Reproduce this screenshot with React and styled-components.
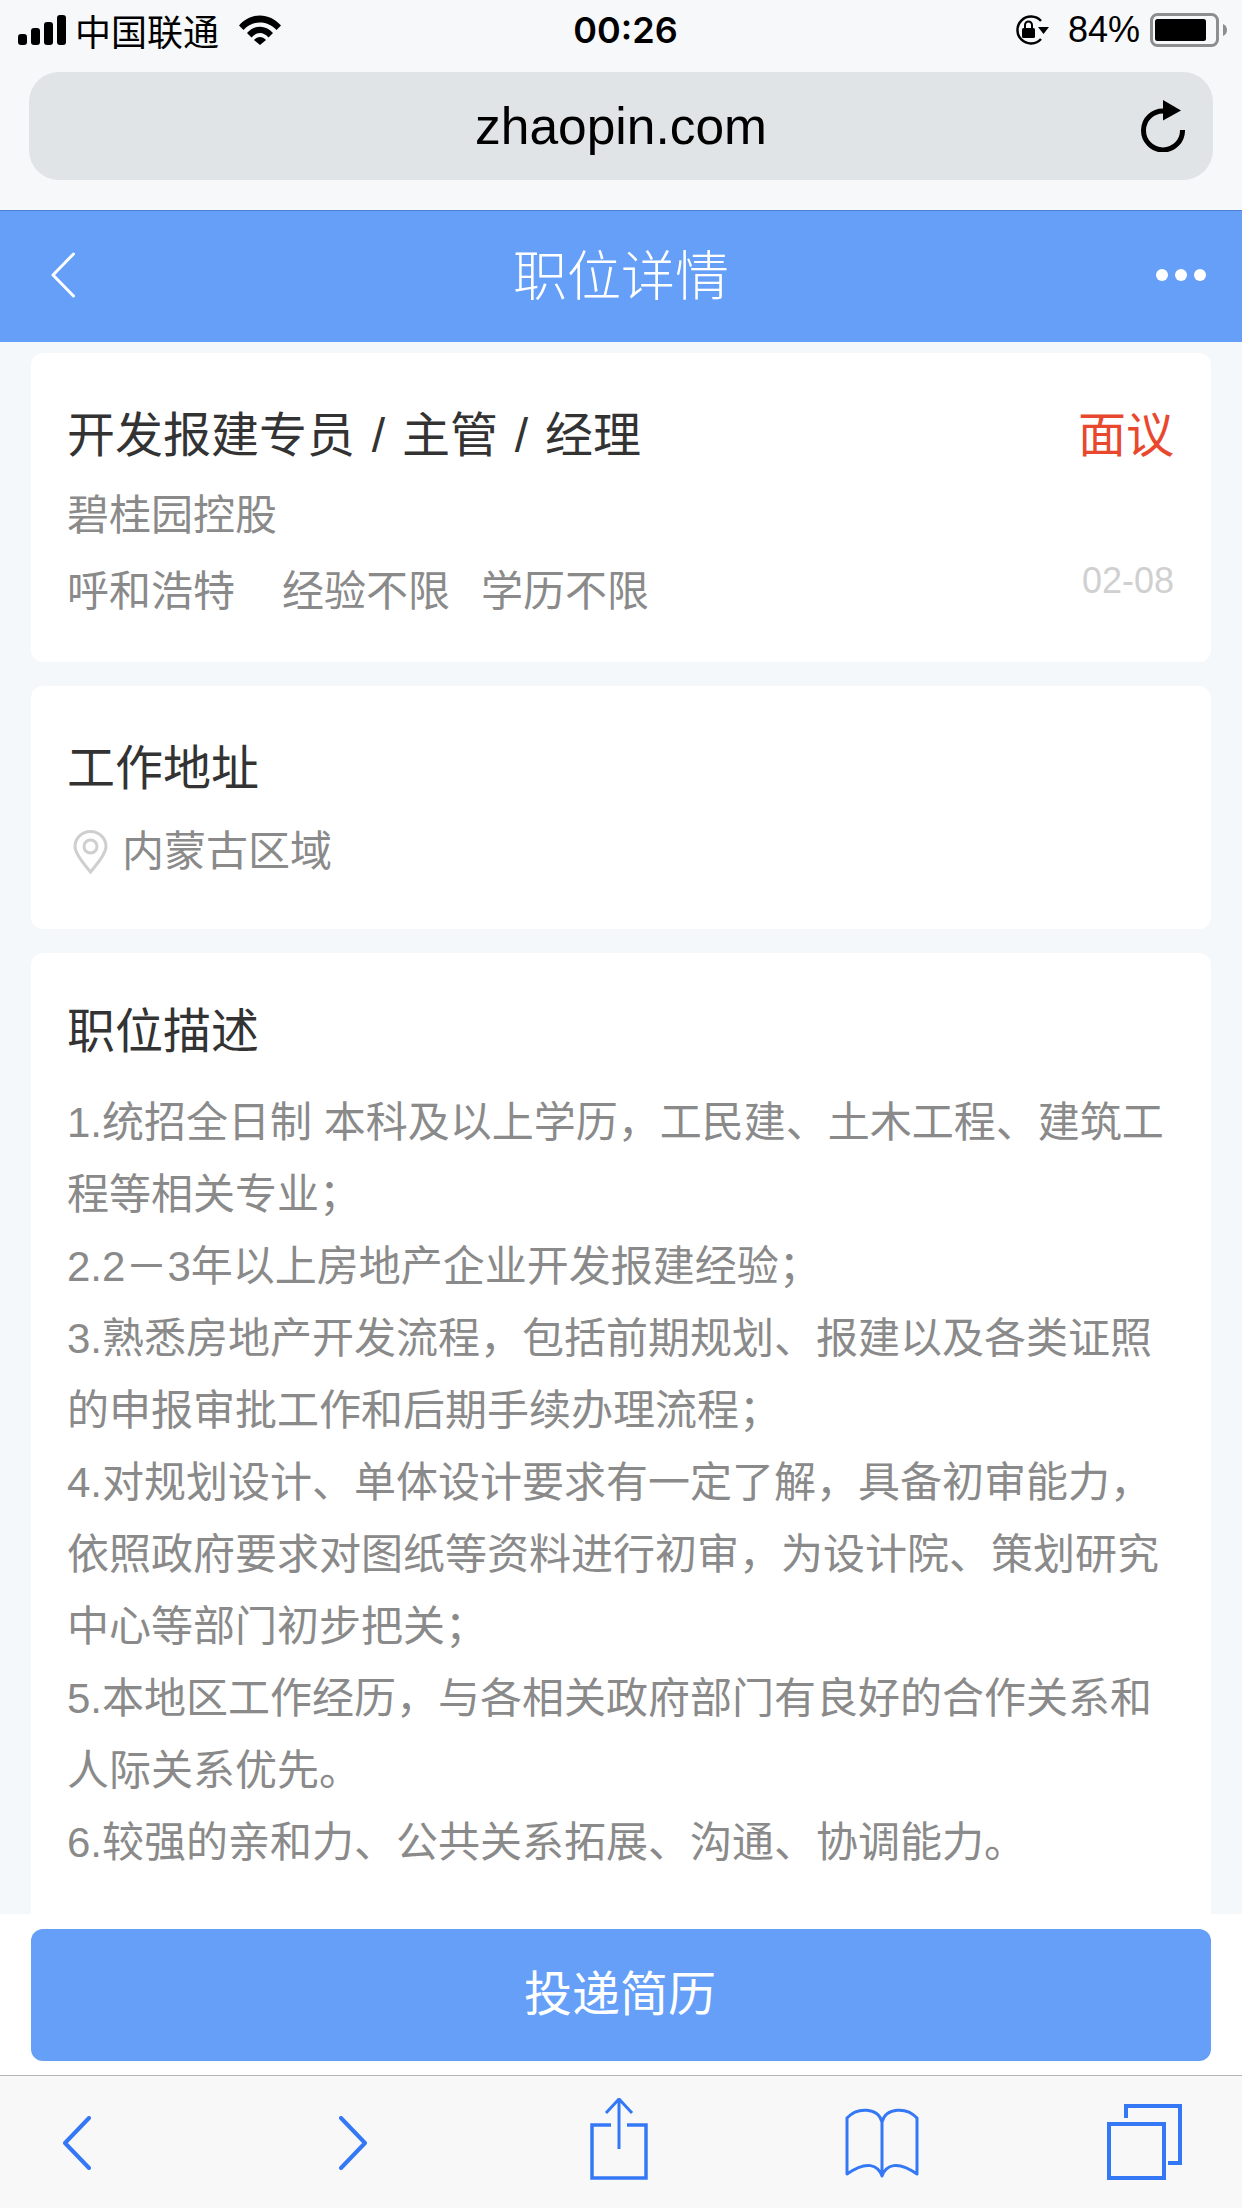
import styled, { createGlobalStyle } from "styled-components";

const GlobalStyle = createGlobalStyle`
  html, body {
    margin: 0;
    padding: 0;
    background: #f4f8fb;
    font-family: "Liberation Sans", "Noto Sans CJK SC", sans-serif;
  }
`;

const Page = styled.div`
  width: 1242px;
  height: 2208px;
  display: flex;
  flex-direction: column;
  overflow: hidden;
`;

const Chrome = styled.div`
  height: 210px;
  flex: none;
  background: #f7f8fa;
  box-sizing: border-box;
`;

const StatusBar = styled.div`
  height: 72px;
  box-sizing: border-box;
  padding: 0 15px 12px 18px;
  display: grid;
  grid-template-columns: 1fr auto 1fr;
  align-items: center;
  font-size: 36px;
  color: #000;
`;

const StatusLeft = styled.div`
  display: flex;
  align-items: center;
`;

const StatusRight = styled.div`
  display: flex;
  align-items: center;
  justify-content: flex-end;
`;

const Time = styled.div`
  font-family: Inter, "Liberation Sans", sans-serif;
  font-weight: 600;
  margin-left: 6px;
`;

const Carrier = styled.span`
  margin: 0 20px 0 9px;
`;

const Percent = styled.span`
  margin: 0 10px 0 19px;
`;

const UrlBar = styled.div`
  margin: 0 29px;
  height: 108px;
  border-radius: 30px;
  background: #e1e4e7;
  display: grid;
  grid-template-columns: 1fr auto 1fr;
  align-items: center;
  font-size: 51.5px;
  color: #000;
`;

const UrlText = styled.div`
  grid-column: 2;
`;

const Reload = styled.svg`
  grid-column: 3;
  justify-self: end;
  margin-right: 28px;
  display: block;
`;

const Header = styled.div`
  height: 132px;
  flex: none;
  box-sizing: border-box;
  border-top: 1px solid #4f7fd0;
  background: #659ff8;
  padding: 0 36px 4px;
  display: grid;
  grid-template-columns: 1fr auto 1fr;
  align-items: center;
  color: #fff;
`;

const BackIcon = styled.svg`
  display: block;
  margin-left: 15px;
`;

const HeaderTitle = styled.div`
  font-size: 54px;
  font-weight: 300;
  margin-bottom: 4px;
`;

const Dots = styled.div`
  justify-self: end;
  display: flex;
  gap: 7px;
`;

const Dot = styled.span`
  width: 12px;
  height: 12px;
  border-radius: 50%;
  background: #fff;
`;

const Content = styled.div`
  flex: 1;
  min-height: 0;
  overflow: hidden;
  padding: 11px 31px 0;
  display: flex;
  flex-direction: column;
  gap: 24px;
`;

const Card = styled.div`
  flex: ${(p) => (p.$fill ? "1" : "none")};
  height: ${(p) => (p.$height ? `${p.$height}px` : "auto")};
  box-sizing: border-box;
  background: #fff;
  border-radius: ${(p) => (p.$fill ? "12px 12px 0 0" : "12px")};
  padding: ${(p) => p.$pad || "0"}px 37px 0 36px;
`;

const TitleRow = styled.div`
  display: flex;
  justify-content: space-between;
  align-items: center;
`;

const Heading = styled.div`
  font-size: 48px;
  line-height: 66px;
  word-spacing: 3.5px;
  color: #333;
`;

const Salary = styled.div`
  font-size: 48px;
  line-height: 66px;
  color: #e8492e;
`;

const Muted = styled.div`
  font-size: 42px;
  line-height: 66px;
  color: #8a8a8a;
  margin-top: ${(p) => p.$top || 0}px;
`;

const MetaRow = styled.div`
  display: flex;
  justify-content: space-between;
  align-items: flex-start;
  margin-top: 10px;
`;

const Tags = styled.div`
  display: flex;
`;

const Tag = styled.span`
  font-size: 42px;
  line-height: 66px;
  color: #8a8a8a;
  margin-right: ${(p) => p.$gap || 0}px;
`;

const DateText = styled.div`
  font-size: 36px;
  line-height: 44px;
  color: #d0d0d0;
`;

const Place = styled.div`
  display: flex;
  align-items: center;
  margin-top: 17px;
`;

const PinIcon = styled.svg`
  display: block;
  margin: 0 14px 0 6px;
`;

const Description = styled.div`
  font-size: 42px;
  line-height: 72px;
  color: #8a8a8a;
  margin-top: 22px;
  margin-right: -8px;
`;

const Footer = styled.div`
  flex: none;
  height: 161px;
  box-sizing: border-box;
  background: #fff;
  padding: 15px 31px 0;
`;

const ApplyButton = styled.div`
  height: 132px;
  box-sizing: border-box;
  padding: 0 2px 10px 0;
  border-radius: 12px;
  background: #659ff8;
  color: #fff;
  font-size: 48px;
  display: flex;
  align-items: center;
  justify-content: center;
`;

const Toolbar = styled.div`
  flex: none;
  height: 133px;
  box-sizing: border-box;
  border-top: 1px solid #b5b5b5;
  background: #f8f8f9;
  padding: 22px 0 0;
  display: flex;
  align-items: flex-start;
`;

const ToolIcon = styled.svg`
  display: block;
  fill: none;
  stroke: #3478f6;
  stroke-width: 4;
  margin-top: ${(p) => p.$top || 0}px;
  margin-left: ${(p) => p.$left}px;
`;

const lines = [
  "1.统招全日制 本科及以上学历，工民建、土木工程、建筑工程等相关专业；",
  "2.2－3年以上房地产企业开发报建经验；",
  "3.熟悉房地产开发流程，包括前期规划、报建以及各类证照的申报审批工作和后期手续办理流程；",
  "4.对规划设计、单体设计要求有一定了解，具备初审能力，依照政府要求对图纸等资料进行初审，为设计院、策划研究中心等部门初步把关；",
  "5.本地区工作经历，与各相关政府部门有良好的合作关系和人际关系优先。",
  "6.较强的亲和力、公共关系拓展、沟通、协调能力。",
];

const App = () => {
  return (
    <Page>
      <GlobalStyle />
      <Chrome>
        <StatusBar>
          <StatusLeft>
            <svg width="48" height="30" viewBox="0 0 48 30">
              <rect x="0" y="19" width="9" height="11" rx="3" />
              <rect x="13" y="13" width="9" height="17" rx="3" />
              <rect x="26" y="7" width="9" height="23" rx="3" />
              <rect x="39" y="0" width="9" height="30" rx="3" />
            </svg>
            <Carrier>中国联通</Carrier>
            <svg width="42" height="30" viewBox="0 0 42 30">
              <path d="M0 10.500C11.500 -3 30.500 -3 42 10.500L37.500 15C28.500 5 13.500 5 4.500 15Z" />
              <path d="M8 18C15.500 9.500 26.500 9.500 34 18L29.500 22.500C24.500 16.500 17.500 16.500 12.500 22.500Z" />
              <path d="M15 25C18.500 21 23.500 21 27 25L21 30Z" />
            </svg>
          </StatusLeft>
          <Time>00:26</Time>
          <StatusRight>
            <svg width="35" height="30" viewBox="0 0 35 30">
              <path d="M27 6A13.500 13.500 0 1 0 27 24" fill="none" stroke="#000" strokeWidth="2.500" />
              <path d="M24 12H35L29.500 19Z" />
              <rect x="8" y="13" width="13" height="10" rx="1.500" />
              <path d="M11 13V10a3.500 3.500 0 0 1 7 0V13" fill="none" stroke="#000" strokeWidth="2" />
            </svg>
            <Percent>84%</Percent>
            <svg width="77" height="34" viewBox="0 0 77 34">
              <rect x="1.500" y="1.500" width="66" height="31" rx="6" fill="none" stroke="#8e8e8e" strokeWidth="3" />
              <rect x="5" y="6" width="51" height="22" rx="2.500" />
              <path d="M73 11C75.500 12 77 14 77 17C77 20 75.500 22 73 23Z" fill="#8e8e8e" />
            </svg>
          </StatusRight>
        </StatusBar>
        <UrlBar>
          <UrlText>zhaopin.com</UrlText>
          <Reload width="44" height="52" viewBox="0 0 44 52" fill="none">
            <path d="M23 11A19.500 19.500 0 1 0 41.500 30" stroke="#000" strokeWidth="5" />
            <path d="M22 0L40 10.500L22 20.500Z" fill="#000" />
          </Reload>
        </UrlBar>
      </Chrome>
      <Header>
        <BackIcon width="24" height="46" viewBox="0 0 24 46" fill="none">
          <path d="M22.500 2L2 23L22.500 44" stroke="#fff" strokeWidth="3" strokeLinecap="round" strokeLinejoin="round" />
        </BackIcon>
        <HeaderTitle>职位详情</HeaderTitle>
        <Dots>
          <Dot />
          <Dot />
          <Dot />
        </Dots>
      </Header>
      <Content>
        <Card $height={309} $pad={50}>
          <TitleRow>
            <Heading>开发报建专员 / 主管 / 经理</Heading>
            <Salary>面议</Salary>
          </TitleRow>
          <Muted $top={14}>碧桂园控股</Muted>
          <MetaRow>
            <Tags>
              <Tag $gap={47}>呼和浩特</Tag>
              <Tag $gap={31}>经验不限</Tag>
              <Tag>学历不限</Tag>
            </Tags>
            <DateText>02-08</DateText>
          </MetaRow>
        </Card>
        <Card $height={243} $pad={50}>
          <Heading>工作地址</Heading>
          <Place>
            <PinIcon width="35" height="44" viewBox="0 0 35 44" fill="none">
              <path d="M17.500 42C13 36 2 25 2 16.500A15.500 15 0 0 1 33 16.500C33 25 22 36 17.500 42Z" stroke="#cfcfcf" strokeWidth="3" />
              <circle cx="17.500" cy="16.500" r="6.500" stroke="#cfcfcf" strokeWidth="3" />
            </PinIcon>
            <Tag>内蒙古区域</Tag>
          </Place>
        </Card>
        <Card $fill $pad={46}>
          <Heading>职位描述</Heading>
          <Description>
            {lines.map((line) => (
              <div key={line}>{line}</div>
            ))}
          </Description>
        </Card>
      </Content>
      <Footer>
        <ApplyButton>投递简历</ApplyButton>
      </Footer>
      <Toolbar>
        <ToolIcon $left={63} $top={18} width="28" height="54" viewBox="0 0 28 54" strokeLinecap="round" strokeLinejoin="round">
          <path d="M26 2L2 27L26 52" />
        </ToolIcon>
        <ToolIcon $left={248} $top={18} width="28" height="54" viewBox="0 0 28 54" strokeLinecap="round" strokeLinejoin="round">
          <path d="M2 2L26 27L2 52" />
        </ToolIcon>
        <ToolIcon $left={223} width="58" height="82" viewBox="0 0 58 82">
          <path d="M21 27H2V80H56V27H37" strokeWidth="3.500" />
          <path d="M29 51V3M16 15L29 1L42 15" strokeWidth="3" />
        </ToolIcon>
        <ToolIcon $left={197} $top={10} width="74" height="72" viewBox="0 0 74 72" strokeLinejoin="round">
          <path d="M37 68C33 57 22 52 2 66V10C12 -1 33 -1 37 14C41 -1 62 -1 72 10V66C52 52 41 57 37 68ZM37 14V68" strokeWidth="3" />
        </ToolIcon>
        <ToolIcon $left={188} $top={6} width="75" height="76" viewBox="0 0 75 76">
          <path d="M19 14V2H73V59H61" strokeWidth="4" />
          <rect x="2" y="20" width="55" height="54" strokeWidth="4" />
        </ToolIcon>
      </Toolbar>
    </Page>
  );
};

export default App;
